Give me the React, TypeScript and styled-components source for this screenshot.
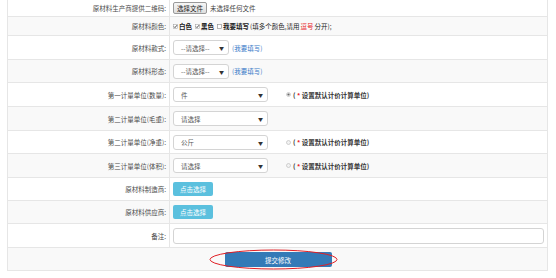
import React from "react";
import styled, { createGlobalStyle } from "styled-components";

const Global = createGlobalStyle`
  html, body { margin: 0; padding: 0; background: #fff; }
  body { font-family: "Noto Sans CJK SC", "Noto Sans", sans-serif; font-size: 6.5px; color: #444; }
`;

const Page = styled.div`
  width: 556px;
  height: 278px;
  padding-left: 7px;
  box-sizing: border-box;
  overflow: hidden;
`;

const Table = styled.div`
  width: 541px;
  border-left: 1px solid #e6e6e6;
  border-right: 1px solid #e6e6e6;
  border-bottom: 1px solid #e6e6e6;
  box-sizing: border-box;
`;

const Row = styled.div<{ $h: number; $striped?: boolean; $first?: boolean }>`
  display: grid;
  grid-template-columns: 162px 1fr;
  height: ${(p) => p.$h}px;
  box-sizing: border-box;
  border-top: ${(p) => (p.$first ? "none" : "1px solid #e6e6e6")};
  background: ${(p) => (p.$striped ? "#f9f9f9" : "#fff")};
`;

const SubmitRow = styled.div`
  position: relative;
  display: flex;
  align-items: center;
  justify-content: center;
  height: 23px;
  box-sizing: border-box;
  border-top: 1px solid #e6e6e6;
  background: #f9f9f9;
`;

const Label = styled.div`
  display: flex;
  align-items: center;
  justify-content: flex-end;
  padding-right: 3px;
  border-right: 1px solid #e6e6e6;
  color: #4a4a4a;
  white-space: nowrap;
`;

const Value = styled.div`
  display: flex;
  align-items: center;
  padding-left: 3px;
  gap: 2px;
  white-space: nowrap;
`;

const FileButton = styled.span`
  display: inline-flex;
  align-items: center;
  height: 12px;
  padding: 0 3px;
  border: 1px solid #999;
  border-radius: 2px;
  background: linear-gradient(#f6f6f6, #dedede);
  color: #222;
  font-size: 6.5px;
  box-sizing: border-box;
`;

const Muted = styled.span`
  color: #444;
  margin-left: 1px;
`;

const Check = styled.span<{ $bold?: boolean }>`
  display: inline-flex;
  align-items: center;
  gap: 1px;
  color: #222;
  font-weight: ${(p) => (p.$bold ? 700 : 400)};
  margin-right: 1px;
`;

const Red = styled.span`
  color: #e8262a;
`;

const Select = styled.div<{ $w: number }>`
  display: flex;
  align-items: center;
  justify-content: space-between;
  width: ${(p) => p.$w}px;
  height: 15px;
  box-sizing: border-box;
  border: 1px solid #d4d4d4;
  border-radius: 3px;
  background: #fff;
  padding: 0 4px 0 7px;
  color: #555;
`;

const Arrow = styled.span`
  font-size: 5px;
  color: #333;
`;

const Link = styled.span`
  color: #3a7bc8;
  margin-left: 1px;
`;

const RadioGroup = styled.span`
  display: inline-flex;
  align-items: center;
  gap: 2px;
  margin-left: 16px;
  color: #333;
  font-weight: 700;
`;

const InfoButton = styled.span`
  display: inline-flex;
  align-items: center;
  justify-content: center;
  width: 40px;
  height: 14px;
  border-radius: 2px;
  background: #5bc0de;
  color: #fff;
  font-size: 6.5px;
`;

const TextInput = styled.div`
  width: 371px;
  height: 16px;
  box-sizing: border-box;
  border: 1px solid #d4d4d4;
  border-radius: 3px;
  background: #fff;
`;

const PrimaryButton = styled.span`
  display: inline-flex;
  align-items: center;
  justify-content: center;
  width: 107px;
  height: 15px;
  border-radius: 2px;
  background: #337ab7;
  color: #fff;
  font-size: 6.5px;
  margin-left: 1px;
  margin-top: 1px;
`;

const Ellipse = styled.svg`
  position: absolute;
  left: 0;
  top: 0;
  pointer-events: none;
`;

const CheckIcon = () => (
  <svg width="5" height="5" viewBox="0 0 5 5">
    <rect x="0.5" y="0.5" width="4" height="4" fill="#fff" stroke="#999" strokeWidth="0.5" />
    <path d="M1 2.6 L2 3.6 L4 1.2" fill="none" stroke="#222" strokeWidth="0.8" />
  </svg>
);

const BoxIcon = () => (
  <svg width="5" height="5" viewBox="0 0 5 5">
    <rect x="0.5" y="0.5" width="4" height="4" fill="#fff" stroke="#888" strokeWidth="0.6" />
  </svg>
);

const Radio = ({ on }: { on?: boolean }) => (
  <svg width="5" height="5" viewBox="0 0 5 5">
    <circle cx="2.5" cy="2.5" r="2" fill="#f2f2f2" stroke="#aaa" strokeWidth="0.5" />
    {on && <circle cx="2.5" cy="2.5" r="1.1" fill="#666" />}
  </svg>
);

const UnitRadio = ({ on }: { on?: boolean }) => (
  <RadioGroup>
    <Radio on={on} />
    <span>
      ( <Red>*</Red> 设置默认计价计算单位)
    </span>
  </RadioGroup>
);

const SmallSelect = () => (
  <Select $w={56}>
    <span>--请选择--</span>
    <Arrow>▼</Arrow>
  </Select>
);

const UnitSelect = ({ text }: { text: string }) => (
  <Select $w={95}>
    <span>{text}</span>
    <Arrow>▼</Arrow>
  </Select>
);

export default function App() {
  return (
    <>
      <Global />
      <Page>
        <Table>
          <Row $h={16} $first>
            <Label>原材料生产商提供二维码:</Label>
            <Value>
              <FileButton>选择文件</FileButton>
              <Muted>未选择任何文件</Muted>
            </Value>
          </Row>
          <Row $h={19} $striped>
            <Label>原材料颜色:</Label>
            <Value>
              <Check $bold>
                <CheckIcon />白色
              </Check>
              <Check $bold>
                <CheckIcon />黑色
              </Check>
              <Check>
                <BoxIcon />
                <b>我要填写</b>(填多个颜色,请用<Red>逗号</Red>分开);
              </Check>
            </Value>
          </Row>
          <Row $h={24}>
            <Label>原材料款式:</Label>
            <Value>
              <SmallSelect />
              <Link>(我要填写)</Link>
            </Value>
          </Row>
          <Row $h={23} $striped>
            <Label>原材料形态:</Label>
            <Value>
              <SmallSelect />
              <Link>(我要填写)</Link>
            </Value>
          </Row>
          <Row $h={24}>
            <Label>第一计量单位(数量):</Label>
            <Value>
              <UnitSelect text="件" />
              <UnitRadio on />
            </Value>
          </Row>
          <Row $h={24} $striped>
            <Label>第二计量单位(毛重):</Label>
            <Value>
              <UnitSelect text="请选择" />
            </Value>
          </Row>
          <Row $h={23}>
            <Label>第二计量单位(净重):</Label>
            <Value>
              <UnitSelect text="公斤" />
              <UnitRadio />
            </Value>
          </Row>
          <Row $h={24} $striped>
            <Label>第三计量单位(体积):</Label>
            <Value>
              <UnitSelect text="请选择" />
              <UnitRadio />
            </Value>
          </Row>
          <Row $h={23}>
            <Label>原材料制造商:</Label>
            <Value>
              <InfoButton>点击选择</InfoButton>
            </Value>
          </Row>
          <Row $h={23} $striped>
            <Label>原材料供应商:</Label>
            <Value>
              <InfoButton>点击选择</InfoButton>
            </Value>
          </Row>
          <Row $h={24}>
            <Label>备注:</Label>
            <Value>
              <TextInput />
            </Value>
          </Row>
          <SubmitRow>
            <PrimaryButton>提交修改</PrimaryButton>
            <Ellipse width="539" height="23" viewBox="0 0 539 23">
              <ellipse cx="265.5" cy="11.5" rx="63.5" ry="9.5" fill="none" stroke="#e01e24" strokeWidth="1" />
            </Ellipse>
          </SubmitRow>
        </Table>
      </Page>
    </>
  );
}
